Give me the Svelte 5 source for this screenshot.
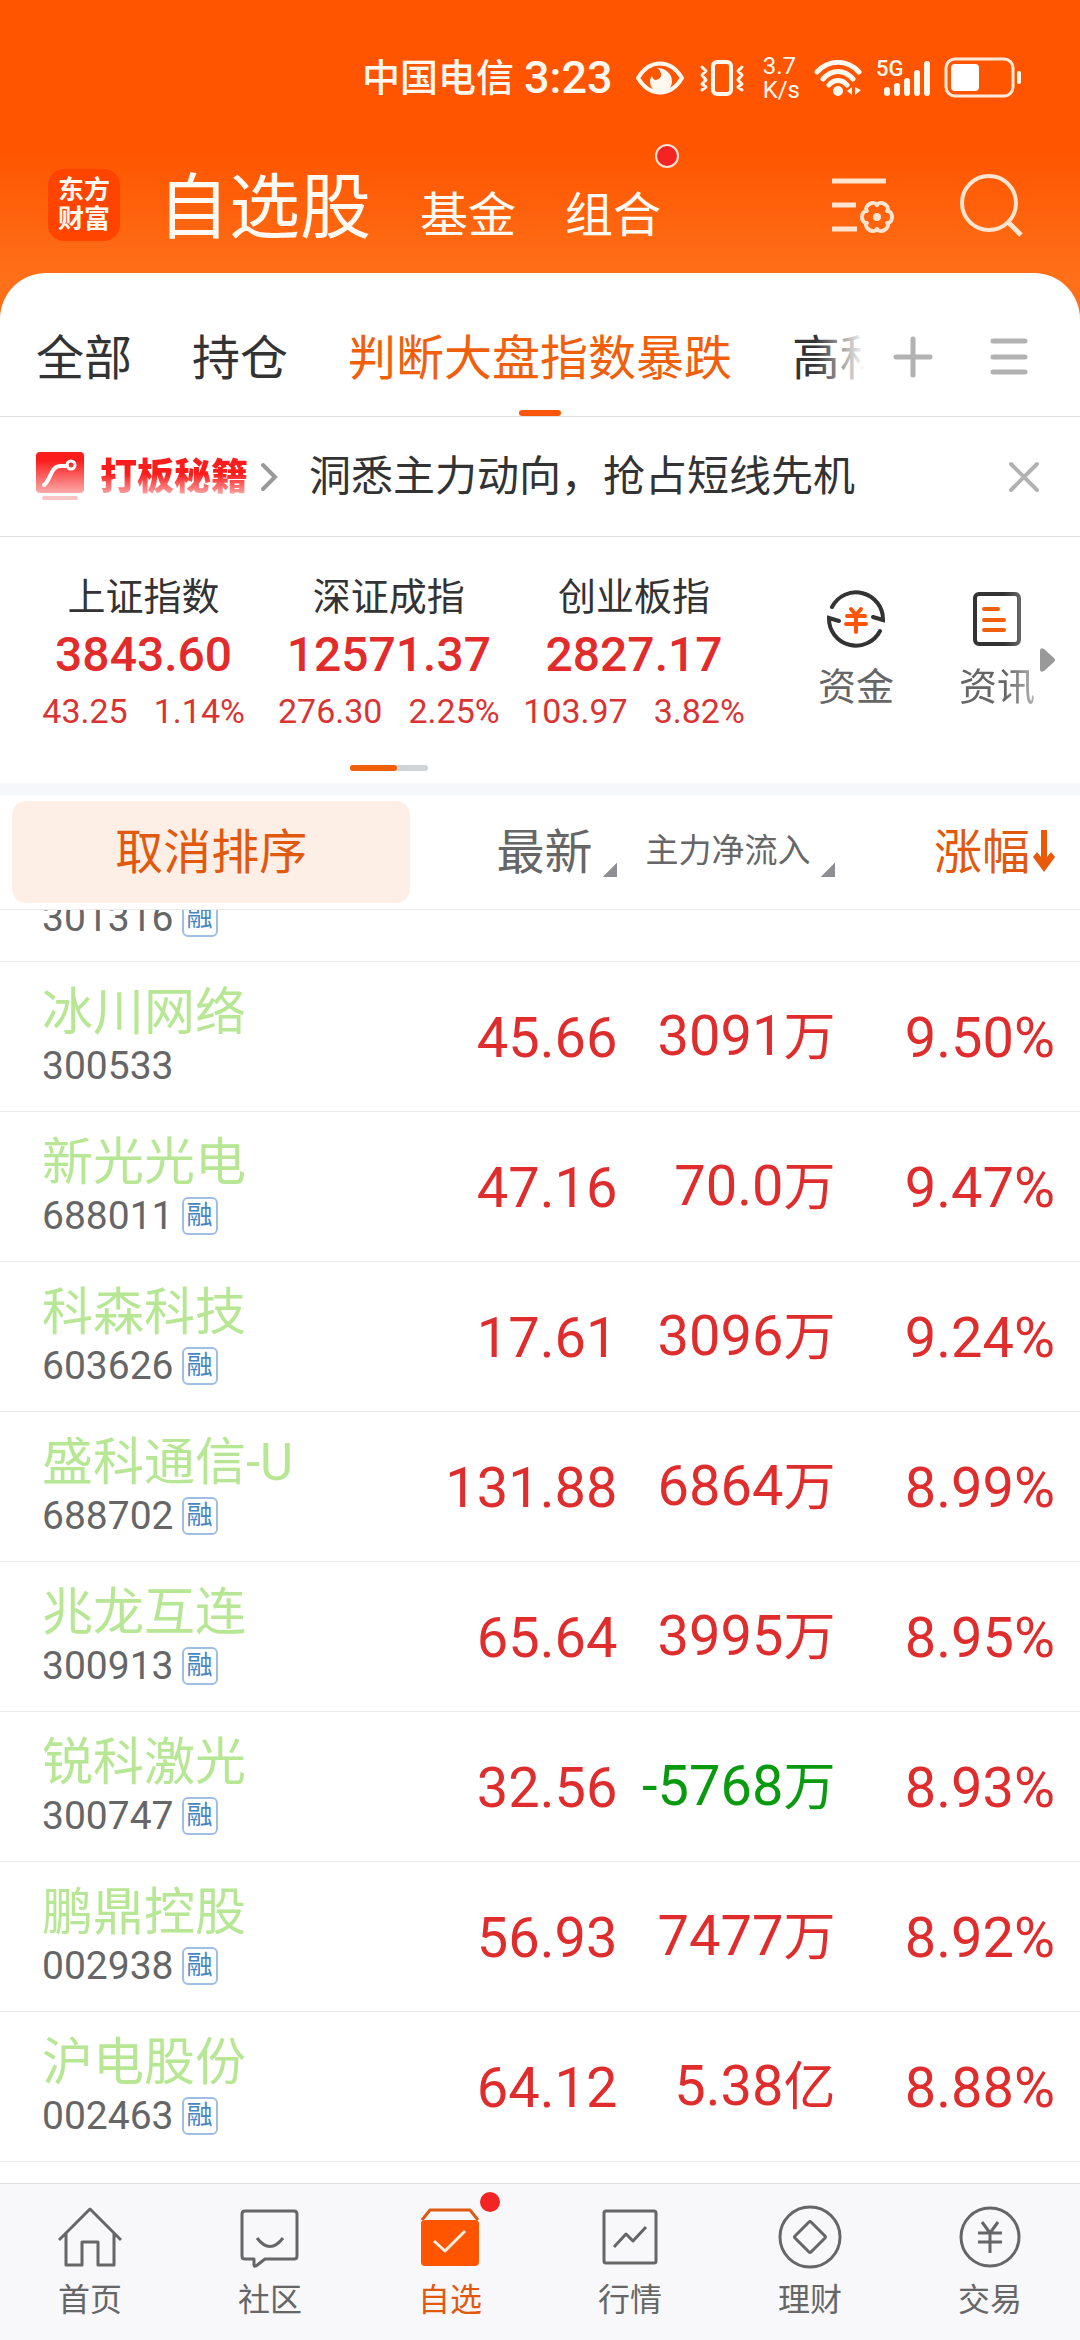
<script lang="ts">
	interface Stock {
		name: string;
		code: string;
		margin: boolean;
		price: string;
		flow: string;
		unit: string;
		change: string;
	}

	const tabs = ['全部', '持仓', '判断大盘指数暴跌', '高科'];
	let activeTab = $state('判断大盘指数暴跌');

	const indices = [
		{ name: '上证指数', value: '3843.60', diff: '43.25', pct: '1.14%' },
		{ name: '深证成指', value: '12571.37', diff: '276.30', pct: '2.25%' },
		{ name: '创业板指', value: '2827.17', diff: '103.97', pct: '3.82%' },
	];

	const stocks: Stock[] = [
		{ name: '冰川网络', code: '300533', margin: false, price: '45.66', flow: '3091', unit: '万', change: '9.50%' },
		{ name: '新光光电', code: '688011', margin: true, price: '47.16', flow: '70.0', unit: '万', change: '9.47%' },
		{ name: '科森科技', code: '603626', margin: true, price: '17.61', flow: '3096', unit: '万', change: '9.24%' },
		{ name: '盛科通信-U', code: '688702', margin: true, price: '131.88', flow: '6864', unit: '万', change: '8.99%' },
		{ name: '兆龙互连', code: '300913', margin: true, price: '65.64', flow: '3995', unit: '万', change: '8.95%' },
		{ name: '锐科激光', code: '300747', margin: true, price: '32.56', flow: '-5768', unit: '万', change: '8.93%' },
		{ name: '鹏鼎控股', code: '002938', margin: true, price: '56.93', flow: '7477', unit: '万', change: '8.92%' },
		{ name: '沪电股份', code: '002463', margin: true, price: '64.12', flow: '5.38', unit: '亿', change: '8.88%' },
	];

	const navItems = [
		{ id: 'home', label: '首页' },
		{ id: 'community', label: '社区' },
		{ id: 'watch', label: '自选' },
		{ id: 'market', label: '行情' },
		{ id: 'wealth', label: '理财' },
		{ id: 'trade', label: '交易' },
	];
	let activeNav = $state('watch');

	const gearLobes = [0, 60, 120, 180, 240, 300];
</script>

<div class="app">
	<header class="top">
		<div class="status">
			<span class="carrier">中国电信</span>
			<span class="clock">3:23</span>
			<svg width="50" height="36" viewBox="0 0 50 36" fill="none">
				<path d="M3 18C9 8 16 3.500 25 3.500S41 8 47 18C41 28 34 32.500 25 32.500S9 28 3 18Z" stroke="#fff8ef" stroke-width="4" stroke-linejoin="round" />
				<path d="M22 8c9 0 15 6 15 13 0 7-5 12-11 12s-11-5-11-12q0-3 2-5 1 4 4 4 6-2 5-6-1-5-4-6Z" fill="#fff8ef" />
			</svg>
			<svg width="46" height="38" viewBox="0 0 46 38" fill="none" stroke="#fff8ef" stroke-width="4" stroke-linecap="round" stroke-linejoin="round">
				<rect x="14" y="3" width="18" height="32" rx="4" />
				<path d="M3 8l4 4-4 4 4 5-4 4 4 3-4 3M43 8l-4 4 4 4-4 5 4 4-4 3 4 3" stroke-width="3" />
			</svg>
			<span class="speed"><span>3.7</span><span>K/s</span></span>
			<svg width="48" height="38" viewBox="0 0 48 38" fill="none" stroke="#fff8ef" stroke-width="5" stroke-linecap="round">
				<path d="M3 13C15 0 33 0 45 13M9 20C18 10 30 10 39 20M15 26C20 20 28 20 33 26" />
				<circle cx="24" cy="32" r="5" fill="#fff8ef" stroke="none" />
				<path d="M38 28v8l-5-4zM41 28v8l6-5z" fill="#fff8ef" stroke="none" />
			</svg>
			<span class="signal">
				<span class="gen">5G</span>
				<svg width="54" height="38" viewBox="0 0 54 38" stroke="#fff8ef" stroke-width="6" stroke-linecap="round">
					<path d="M11 31v3M21 27v7M31 22v12M41 14v20M51 5v29" />
				</svg>
			</span>
			<svg width="78" height="42" viewBox="0 0 78 42" fill="none">
				<rect x="2" y="2" width="67" height="37" rx="9" stroke="#ffe9d8" stroke-width="3" />
				<rect x="7" y="7" width="28" height="27" rx="4" fill="#fff" />
				<rect x="73" y="14" width="4" height="13" rx="2" fill="#fff8ef" />
			</svg>
		</div>

		<div class="title-bar">
			<div class="logo"><span>东方</span><span>财富</span></div>
			<nav class="sections">
				<h1>自选股</h1>
				<a href="#fund">基金</a>
				<a href="#portfolio" class="dotted">组合</a>
			</nav>
			<button class="icon-button" aria-label="管理">
				<svg width="64" height="60" viewBox="0 0 64 60" fill="none" stroke="#ffe4d0">
					<path d="M0 6h54M0 30h24M0 54h25" stroke-width="5" />
					<g transform="translate(45 42)" stroke-width="4" stroke-linecap="round">
						{#each gearLobes as angle}
							<path d="M10.400 -6C16.500 -6 16.500 6 10.400 6" transform="rotate({angle})" />
						{/each}
						<circle r="4" fill="#ffe4d0" stroke="none" />
					</g>
				</svg>
			</button>
			<button class="icon-button" aria-label="搜索">
				<svg width="64" height="64" viewBox="0 0 64 64" fill="none" stroke="#ffe4d0" stroke-width="4">
					<circle cx="29" cy="30" r="27" />
					<path d="M48 49l13 13" stroke-width="5" />
				</svg>
			</button>
		</div>
	</header>

	<main>
		<div class="tabs">
			<div class="tab-scroll">
				{#each tabs as tab}
					<button class="tab" class:active={tab === activeTab} onclick={() => (activeTab = tab)}>{tab}</button>
				{/each}
			</div>
			<button class="icon-button" aria-label="添加分组">
				<svg width="40" height="42" viewBox="0 0 40 42" stroke="#b2b2b2" stroke-width="5" stroke-linecap="round">
					<path d="M3 21h34M20 3v36" />
				</svg>
			</button>
			<button class="icon-button" aria-label="分组列表">
				<svg width="38" height="42" viewBox="0 0 38 42" stroke="#b2b2b2" stroke-width="5" stroke-linecap="round">
					<path d="M3 5h32M3 21h32M3 36h32" />
				</svg>
			</button>
		</div>

		<div class="banner">
			<svg width="48" height="50" viewBox="0 0 48 50" fill="none">
				<defs>
					<linearGradient id="tip" x1="0" y1="0" x2="0" y2="1">
						<stop offset="0.2" stop-color="#fb1c1c" />
						<stop offset="1" stop-color="#fbaaaa" />
					</linearGradient>
				</defs>
				<rect width="48" height="41" rx="4" fill="url(#tip)" />
				<path d="M8 33c7-5 6-18 16-19h7" stroke="#fff" stroke-width="4" stroke-linecap="round" />
				<circle cx="35" cy="13" r="4" stroke="#fff" stroke-width="3" />
				<rect x="6" y="44" width="36" height="4" rx="2" fill="#f9c4c4" />
			</svg>
			<strong>打板秘籍</strong>
			<svg width="18" height="30" viewBox="0 0 18 30" fill="none" stroke="#999" stroke-width="4" stroke-linecap="round">
				<path d="M3 3l12 12L3 27" />
			</svg>
			<a href="#tips">洞悉主力动向，抢占短线先机</a>
			<button class="icon-button" aria-label="关闭">
				<svg width="32" height="32" viewBox="0 0 32 32" stroke="#b2b2b2" stroke-width="4" stroke-linecap="round">
					<path d="M3 3l26 26M29 3L3 29" />
				</svg>
			</button>
		</div>

		<section class="overview">
			<div class="quotes">
				<div class="indices">
					{#each indices as index}
						<div class="index">
							<span class="index-name">{index.name}</span>
							<span class="index-value">{index.value}</span>
							<span class="index-diff"><span>{index.diff}</span><span>{index.pct}</span></span>
						</div>
					{/each}
				</div>
				<div class="pager"><span></span></div>
			</div>
			<div class="shortcuts">
				<a href="#capital">
					<svg width="60" height="60" viewBox="0 0 60 60" fill="none" stroke="#333" stroke-width="4" stroke-linecap="round">
						<path d="M6 18A27 27 0 0 1 57 31l-10-3" />
						<path d="M54 42A27 27 0 0 1 3 29l10 3" />
						<path d="M25 20l5 6 5-6M21 27h18M20 35h20M30 26v17" stroke="#f9560a" />
					</svg>
					资金
				</a>
				<a href="#news" class="fading">
					<svg width="60" height="60" viewBox="0 0 60 60" fill="none" stroke="#333" stroke-width="4">
						<rect x="8" y="5" width="44" height="50" rx="4" />
						<path d="M17 20h14M17 31h20M17 41h20" stroke="#f0600c" stroke-linecap="round" />
					</svg>
					资讯
				</a>
			</div>
			<svg class="more" width="16" height="26" viewBox="0 0 16 26" fill="#999">
				<path d="M0 3Q1 0 4 2L14 11Q16 13 14 15L4 24Q1 26 0 23Z" />
			</svg>
		</section>

		<table>
			<colgroup>
				<col class="col-name" />
				<col class="col-price" />
				<col class="col-flow" />
				<col />
			</colgroup>
			<thead>
				<tr>
					<th><button class="reset">取消排序</button></th>
					<th><button class="sort">最新<i></i></button></th>
					<th><button class="sort small">主力净流入<i></i></button></th>
					<th>
						<button class="sort on">
							涨幅
							<svg width="22" height="42" viewBox="0 0 22 42" fill="#e8590c">
								<path d="M8 0h6v27l4-5 4 5-11 15L0 27l4-5 4 5z" />
							</svg>
						</button>
					</th>
				</tr>
			</thead>
			<tbody>
				<!-- row scrolled halfway under the header -->
				<tr class="partial">
					<td><div class="clip"><div class="code">301316<span class="badge">融</span></div></div></td>
					<td></td>
					<td></td>
					<td></td>
				</tr>
				{#each stocks as stock (stock.code)}
					<tr>
						<td>
							<div class="name">{stock.name}</div>
							<div class="code">{stock.code}{#if stock.margin}<span class="badge">融</span>{/if}</div>
						</td>
						<td class="num">{stock.price}</td>
						<td class="num flow" class:down={stock.flow.startsWith('-')}>{stock.flow}<span>{stock.unit}</span></td>
						<td class="num">{stock.change}</td>
					</tr>
				{/each}
			</tbody>
		</table>
	</main>

	<nav class="bottom">
		{#each navItems as item}
			<a href="#{item.id}" class:active={item.id === activeNav} onclick={() => (activeNav = item.id)}>
				<svg width="64" height="64" viewBox="0 0 64 64" fill="none" stroke="currentColor" stroke-width="3" stroke-linejoin="round">
					{#if item.id === 'home'}
						<path d="M1 35L32 4l31 31M8 28v32h16V37h16v23h16V28" />
					{:else if item.id === 'community'}
						<path d="M7 6h49q3 0 3 3v42q0 3-3 3H27l-9 7q-2 1-2-1v-6H7q-3 0-3-3V9q0-3 3-3Z" />
						<path d="M19 33q13 17 26 0" />
					{:else if item.id === 'watch'}
						<path d="M4 15l8-10h40l8 10" />
						<rect x="3" y="15" width="58" height="46" rx="4" fill="#ff5500" stroke="none" />
						<path d="M16 36l11 10 20-20" stroke="#fff0e0" />
					{:else if item.id === 'market'}
						<rect x="6" y="6" width="52" height="52" rx="2" />
						<path d="M16 42l12-13 7 7 13-14" />
					{:else if item.id === 'wealth'}
						<circle cx="32" cy="32" r="30" />
						<path d="M31 17q1-1 2 0l14 14q1 1 0 2L33 47q-1 1-2 0L17 33q-1-1 0-2Z" />
					{:else}
						<circle cx="32" cy="32" r="29" />
						<path d="M24 17l8 11 8-11M20 28h24M20 37h24M32 28v20" />
					{/if}
				</svg>
				{item.label}
				{#if item.id === 'watch'}<span class="dot"></span>{/if}
			</a>
		{/each}
	</nav>
</div>

<style>
	:global(body) {
		margin: 0;
		background: #fff;
	}

	.app {
		display: flex;
		flex-direction: column;
		min-height: 100vh;
		font-family: Roboto, 'Noto Sans CJK SC', sans-serif;
		color: #333;
		background: linear-gradient(#ff5500 0, #ff5500 150px, #ff7019 280px, #ff6a14 340px);
	}

	button {
		border: 0;
		padding: 0;
		background: none;
		font: inherit;
		color: inherit;
	}

	a {
		color: inherit;
		text-decoration: none;
	}

	svg {
		display: block;
		flex-shrink: 0;
	}

	.status {
		display: flex;
		justify-content: flex-end;
		align-items: center;
		gap: 14px;
		height: 48px;
		padding: 54px 58px 0 0;
		color: #fff8ef;
	}

	.carrier {
		margin-right: -4px;
		font-size: 38px;
		font-weight: 500;
		line-height: 44px;
	}

	.clock {
		margin-right: 8px;
		font-size: 45px;
		font-weight: 500;
		line-height: 44px;
	}

	.speed {
		display: flex;
		flex-direction: column;
		margin-left: 4px;
		font-size: 24px;
		line-height: 24px;
	}

	.signal {
		position: relative;
	}

	.gen {
		position: absolute;
		top: 0;
		left: 0;
		font-size: 22px;
		font-weight: 500;
		line-height: 20px;
	}

	.title-bar {
		display: flex;
		align-items: center;
		height: 72px;
		padding: 67px 56px 32px 48px;
	}

	.logo {
		display: flex;
		flex-direction: column;
		justify-content: center;
		align-items: center;
		width: 72px;
		height: 72px;
		border-radius: 16px;
		background: #ff4400;
		color: #fff8ef;
		font-size: 26px;
		font-weight: 700;
		line-height: 29px;
	}

	.sections {
		display: flex;
		align-items: baseline;
		gap: 49px;
		flex: 1;
		margin-left: 38px;
		padding-top: 14px;
		font-size: 48px;
		line-height: 72px;
		color: #fffaf3;
	}

	h1 {
		margin: 0;
		font-size: 71px;
		font-weight: 400;
	}

	.dotted {
		position: relative;
	}

	.dotted::after {
		content: '';
		position: absolute;
		top: -36px;
		right: -18px;
		width: 20px;
		height: 20px;
		border: 2px solid #ffe4d8;
		border-radius: 50%;
		background: #f22424;
	}

	.title-bar .icon-button + .icon-button {
		margin-left: 64px;
	}

	main {
		flex: 1;
		border-radius: 46px 46px 0 0;
		background: #fff;
	}

	.tabs {
		display: flex;
		align-items: center;
		height: 143px;
		padding: 0 52px 0 36px;
		border-bottom: 1px solid #e2e2e2;
	}

	.tab-scroll {
		position: relative;
		display: flex;
		flex: 1;
		gap: 60px;
		overflow: hidden;
	}

	.tab-scroll::after {
		content: '';
		position: absolute;
		inset: 0 0 0 auto;
		width: 50px;
		background: linear-gradient(to right, transparent, #fff);
	}

	.tab {
		position: relative;
		flex-shrink: 0;
		height: 143px;
		padding-top: 18px;
		font-size: 48px;
	}

	.tab.active {
		color: #f0600c;
	}

	.tab.active::after {
		content: '';
		position: absolute;
		bottom: 0;
		left: 50%;
		width: 42px;
		height: 6px;
		margin-left: -21px;
		border-radius: 3px;
		background: #fb560a;
	}

	.tabs .icon-button {
		margin: 24px 0 0 28px;
	}

	.tabs .icon-button + .icon-button {
		margin-left: 57px;
	}

	.banner {
		display: flex;
		align-items: center;
		height: 119px;
		padding: 0 40px 0 36px;
		border-bottom: 1px solid #e2e2e2;
		font-size: 42px;
	}

	.banner strong {
		margin: 0 12px 0 16px;
		padding-bottom: 6px;
		font-size: 37px;
		font-weight: 900;
		color: transparent;
		background: linear-gradient(#fb1c1c 45%, #fbaaaa 80%);
		background-clip: text;
	}

	.banner a {
		flex: 1;
		margin-left: 31px;
		padding-bottom: 8px;
	}

	.overview {
		display: flex;
		align-items: center;
		height: 246px;
		padding: 0 24px 0 21px;
		border-bottom: 12px solid #f6f7fa;
	}

	.quotes {
		flex: 740;
		padding-top: 20px;
	}

	.indices {
		display: grid;
		grid-template-columns: repeat(3, 1fr);
	}

	.index {
		display: flex;
		flex-direction: column;
		align-items: center;
	}

	.index-name {
		font-size: 38px;
		line-height: 56px;
	}

	.index-value {
		font-size: 48px;
		font-weight: 500;
		line-height: 60px;
		color: #e22b2b;
	}

	.index-diff {
		display: flex;
		gap: 26px;
		font-size: 34px;
		line-height: 52px;
		color: #d83434;
	}

	.pager {
		width: 78px;
		height: 6px;
		margin: 28px auto 0;
		border-radius: 3px;
		background: #d0d4d9;
	}

	.pager span {
		display: block;
		width: 47px;
		height: 6px;
		border-radius: 3px;
		background: #f0600c;
	}

	.shortcuts {
		display: flex;
		flex: 280;
		justify-content: flex-end;
		gap: 65px;
		padding-bottom: 16px;
	}

	.shortcuts a {
		display: flex;
		flex-direction: column;
		align-items: center;
		gap: 10px;
		font-size: 38px;
		line-height: 56px;
		color: #666;
	}

	.fading {
		mask-image: linear-gradient(to right, #000 60%, rgba(0, 0, 0, 0.5));
	}

	.more {
		margin-left: 5px;
	}

	table {
		width: 100%;
		border-collapse: collapse;
		table-layout: fixed;
	}

	.col-name {
		width: 38%;
	}

	.col-price {
		width: 207px;
	}

	.col-flow {
		width: 218px;
	}

	tr {
		height: 150px;
		border-bottom: 1px solid #ebebeb;
	}

	thead tr {
		height: 114px;
	}

	th,
	td {
		box-sizing: border-box;
		padding: 0;
	}

	th {
		font-size: 48px;
		font-weight: 400;
		color: #666;
	}

	th:last-child,
	td:last-child {
		padding-right: 25px;
	}

	td:first-child {
		padding-left: 42px;
	}

	th:first-child {
		padding-left: 12px;
	}

	.reset {
		display: block;
		width: 100%;
		height: 102px;
		padding-bottom: 8px;
		border-radius: 14px;
		background: #fdeee6;
		color: #e0590f;
	}

	.sort {
		display: flex;
		justify-content: flex-end;
		align-items: center;
		gap: 10px;
		width: 100%;
		height: 102px;
		padding-bottom: 8px;
	}

	.sort i {
		width: 15px;
		height: 15px;
		margin-top: 44px;
		background: #8e8e93;
		clip-path: polygon(100% 0, 100% 100%, 0 100%);
	}

	.sort.small {
		font-size: 33px;
	}

	.sort.on {
		gap: 3px;
		color: #e0590f;
	}

	.sort svg {
		margin-top: 6px;
	}

	tr.partial {
		height: 52px;
	}

	.clip {
		display: flex;
		align-items: flex-end;
		height: 51px;
		overflow: hidden;
	}

	.clip .code {
		margin-bottom: 20px;
	}

	.name {
		font-size: 51px;
		line-height: 60px;
		color: #b7e794;
	}

	.code {
		display: flex;
		align-items: center;
		gap: 8px;
		font-size: 39px;
		line-height: 46px;
		color: #666;
	}

	.badge {
		width: 32px;
		height: 34px;
		border: 2px solid #9fbfe2;
		border-radius: 6px;
		font-size: 26px;
		line-height: 32px;
		text-align: center;
		color: #4585c2;
	}

	.num {
		padding-top: 4px;
		font-size: 56px;
		text-align: right;
		white-space: nowrap;
		color: #df2c2c;
	}

	.num.flow {
		padding: 0 0 8px;
	}

	.flow span {
		font-size: 52px;
	}

	.num.down {
		color: #0a9a0f;
	}

	.bottom {
		display: grid;
		grid-template-columns: repeat(6, 1fr);
		height: 156px;
		border-top: 1px solid #dfdfe2;
		background: #f8f8fb;
	}

	.bottom a {
		position: relative;
		display: flex;
		flex-direction: column;
		align-items: center;
		gap: 9px;
		padding-top: 21px;
		font-size: 32px;
		line-height: 44px;
		color: #666;
	}

	.bottom a.active {
		color: #e0590f;
	}

	.dot {
		position: absolute;
		top: 8px;
		left: 50%;
		width: 20px;
		height: 20px;
		margin-left: 30px;
		border-radius: 50%;
		background: #f22424;
	}
</style>
